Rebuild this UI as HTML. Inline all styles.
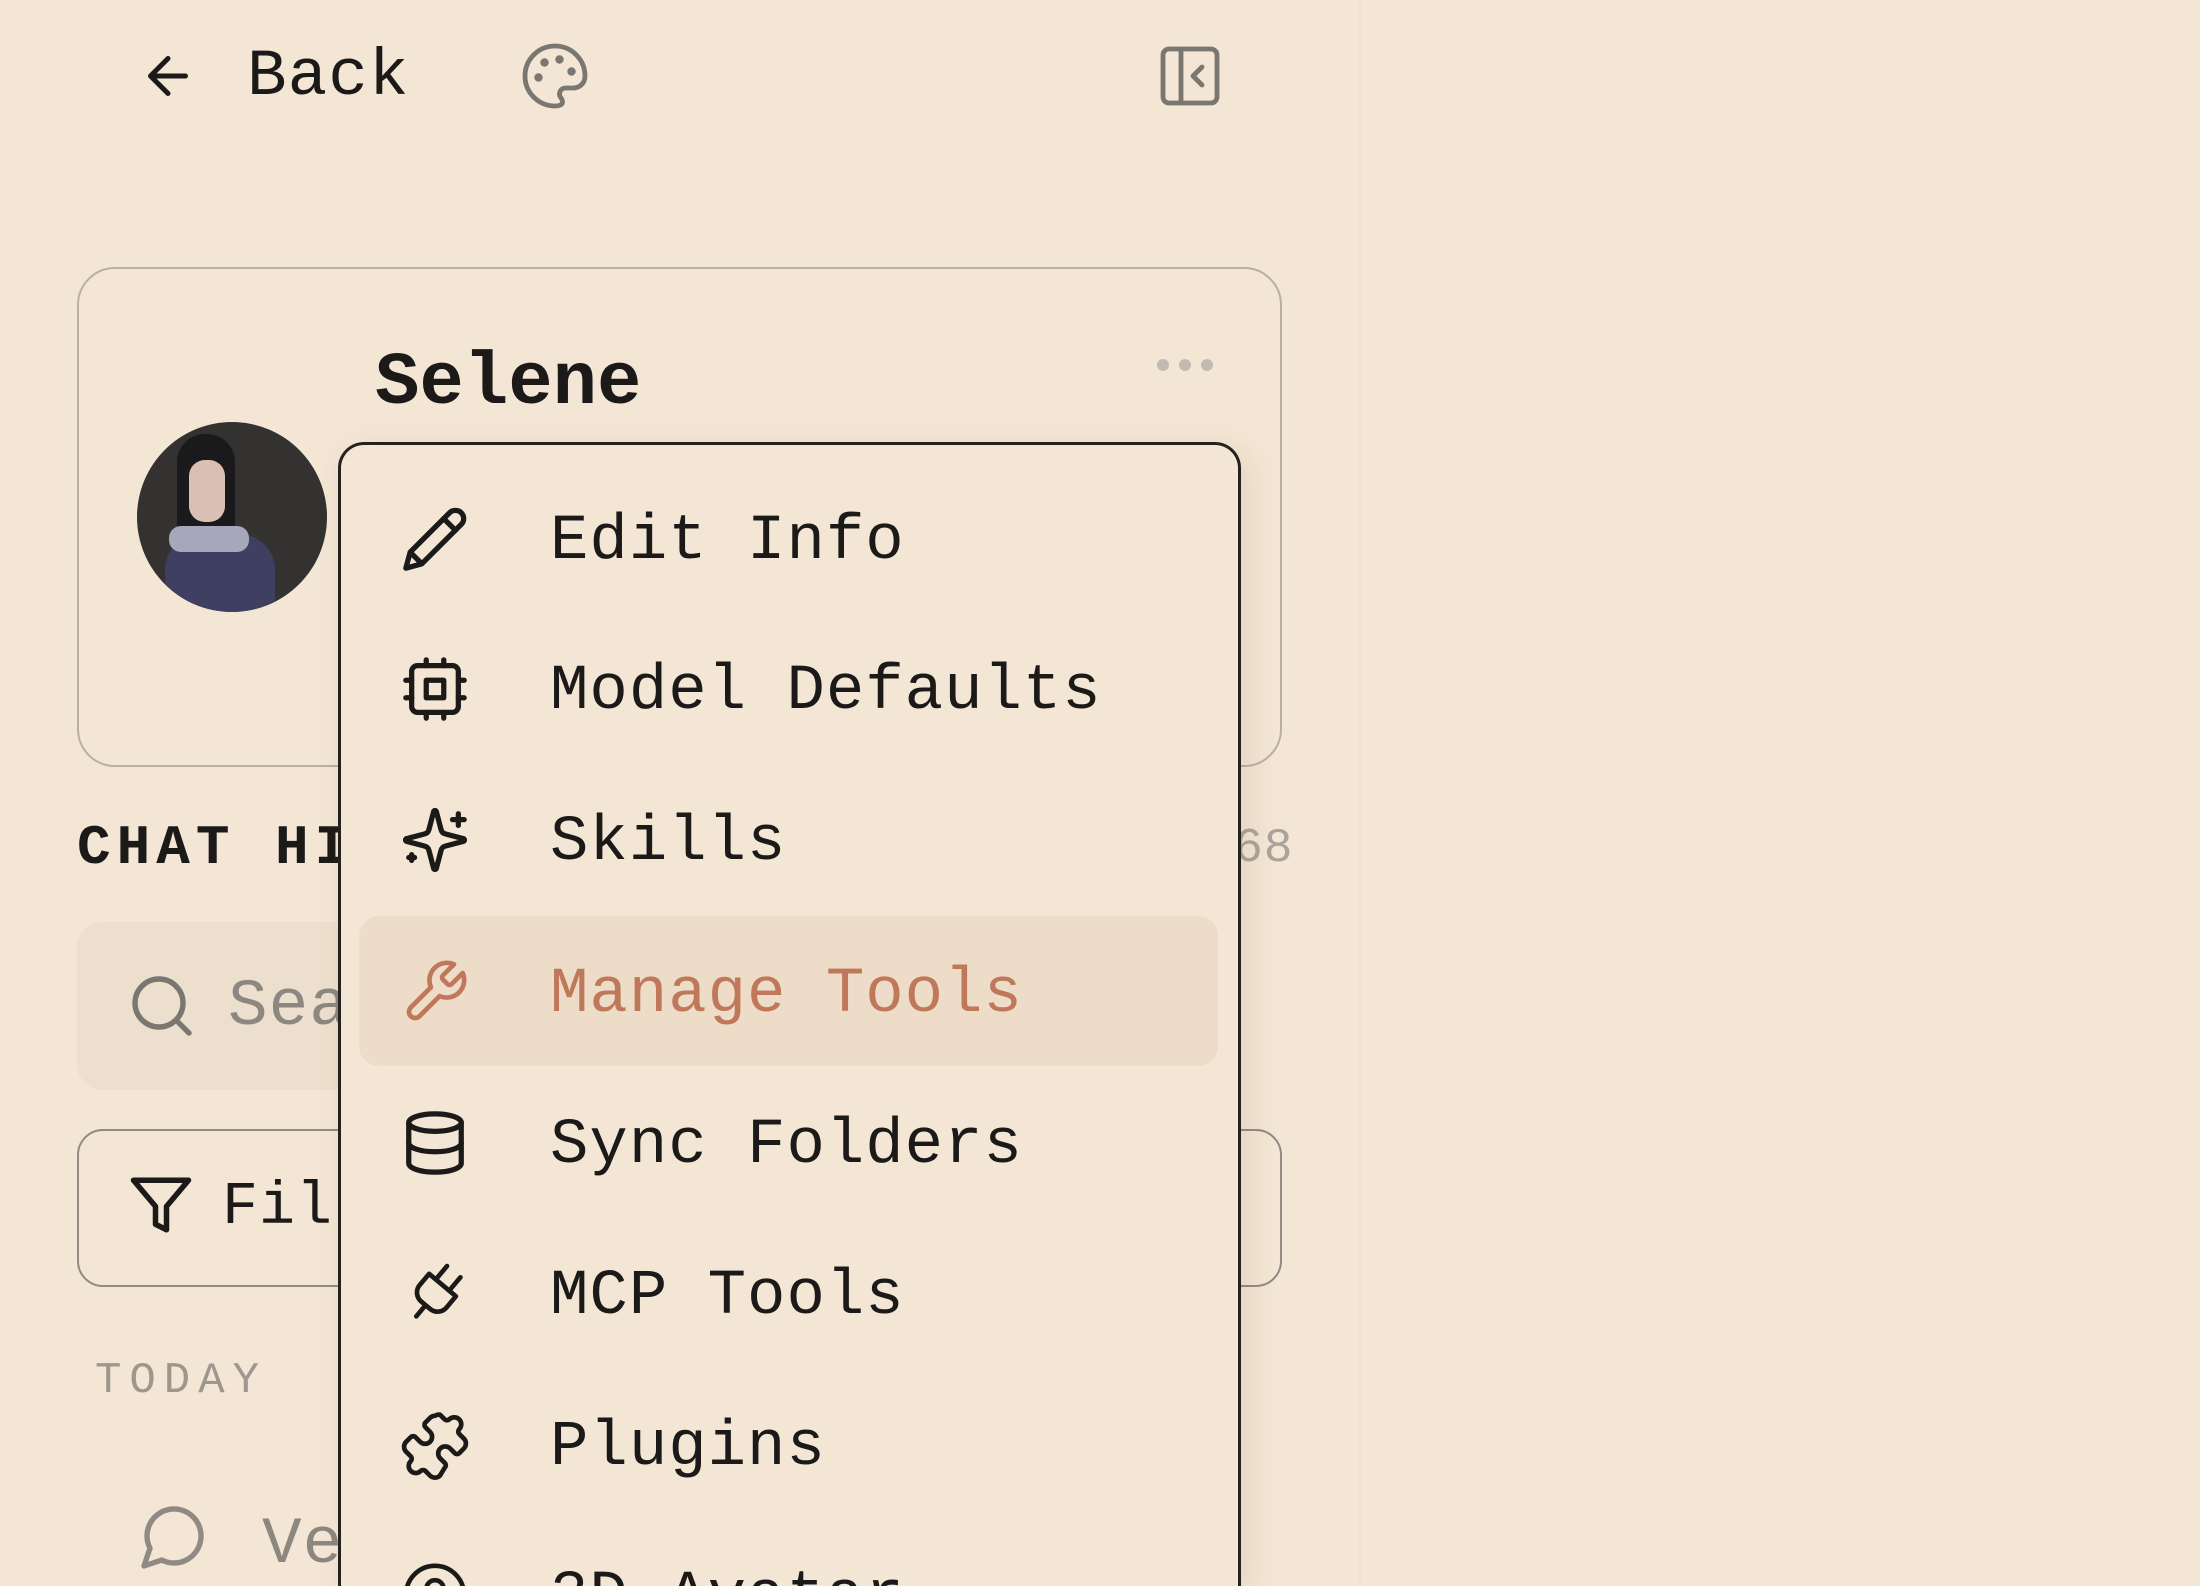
<!DOCTYPE html>
<html><head><meta charset="utf-8"><style>
*{margin:0;padding:0;box-sizing:border-box}
html,body{width:2200px;height:1586px;overflow:hidden}
body{background:#f3e6d4;font-family:"Liberation Mono","DejaVu Sans Mono",monospace;color:#1c1a18}
#w{position:relative;width:2200px;height:1586px;overflow:hidden}
.side{position:absolute;left:0;top:0;width:1361px;height:1586px;background:#f3e6d4;border-right:2px solid #efe1ce}
.abs{position:absolute}
svg{position:absolute;fill:none;stroke-linecap:round;stroke-linejoin:round}
.t{position:absolute;white-space:nowrap;font-size:64px;letter-spacing:1px;line-height:1}
.card{left:77px;top:267px;width:1205px;height:500px;border:2.5px solid #b9b0a3;border-radius:38px}
.menu{left:338px;top:442px;width:903px;height:1144px;border:3px solid #242220;border-bottom:none;border-radius:26px 26px 0 0;background:#f3e6d4;box-shadow:8px 8px 30px rgba(120,90,50,.12)}
.hl{left:359px;top:916px;width:859px;height:150px;background:#eddcc8;border-radius:20px}
</style></head><body><div id="w">
<div class="side"></div>

<svg style="left:136px;top:46px" width="64" height="60" viewBox="0 0 24 24" stroke="#1c1a18" stroke-width="2"><path d="M19 12H5M12 19l-7-7 7-7"/></svg>
<div class="t" style="left:247px;top:44px;font-size:66px">Back</div>
<svg style="left:519px;top:40px" width="72" height="72" viewBox="0 0 24 24" stroke="#7a7670" stroke-width="1.6"><path d="M12 22a10 10 0 1 1 10-10c0 2.8-2.2 4-4 4h-2.5a2 2 0 0 0-1.5 3.3c.3.4.5.8.5 1.3 0 1-.8 1.4-2.5 1.4z"/><circle cx="13.5" cy="6.5" r=".6" fill="#7a7670"/><circle cx="17.5" cy="10.5" r=".6" fill="#7a7670"/><circle cx="8.5" cy="7.5" r=".6" fill="#7a7670"/><circle cx="6.5" cy="12.5" r=".6" fill="#7a7670"/></svg>
<svg style="left:1154px;top:40px" width="72" height="72" viewBox="0 0 24 24" stroke="#7a7670" stroke-width="1.6"><rect x="3" y="3" width="18" height="18" rx="2"/><path d="M9 3v18M16 15l-3-3 3-3"/></svg>

<div class="abs card"></div>
<div class="t" style="left:375px;top:347px;font-size:74px;font-weight:bold;letter-spacing:0">Selene</div>
<div class="abs" style="left:1157px;top:359px;width:12px;height:12px;border-radius:6px;background:#c2bbb2;box-shadow:22px 0 0 #c2bbb2,44px 0 0 #c2bbb2"></div>
<div class="abs" style="left:137px;top:422px;width:190px;height:190px;border-radius:50%;background:#333230;overflow:hidden">
 <div class="abs" style="left:40px;top:12px;width:58px;height:115px;border-radius:28px 28px 8px 8px;background:#1a191c"></div>
 <div class="abs" style="left:52px;top:38px;width:36px;height:62px;border-radius:16px;background:#d9c0b2"></div>
 <div class="abs" style="left:28px;top:112px;width:110px;height:90px;border-radius:36px 36px 0 0;background:#3f3f62"></div>
 <div class="abs" style="left:32px;top:104px;width:80px;height:26px;border-radius:12px;background:#a7a7bb"></div>
</div>

<div class="t" style="left:77px;top:820px;font-size:56px;font-weight:bold;letter-spacing:6px">CHAT HI</div>
<div class="t" style="left:1234px;top:825px;font-size:48px;color:#aaa49b">68</div>
<div class="abs" style="left:77px;top:922px;width:400px;height:168px;border-radius:26px;background:#ecdfcd"></div>
<svg style="left:126px;top:970px" width="72" height="72" viewBox="0 0 24 24" stroke="#7a7670" stroke-width="1.8"><circle cx="11" cy="11" r="8"/><path d="M21 21l-4.3-4.3"/></svg>
<div class="t" style="left:228px;top:974px;font-size:66px;color:#8c877f">Sea</div>
<div class="abs" style="left:77px;top:1129px;width:1205px;height:158px;border:2.5px solid #8f8a83;border-radius:26px"></div>
<svg style="left:128px;top:1172px" width="66" height="66" viewBox="0 0 24 24" stroke="#1c1a18" stroke-width="2"><path d="M22 3H2l8 9.5V19l4 2v-8.5z"/></svg>
<div class="t" style="left:222px;top:1178px;font-size:60px">Fil</div>
<div class="t" style="left:95px;top:1359px;font-size:44px;color:#9d978e;letter-spacing:8px">TODAY</div>
<svg style="left:138px;top:1500px" width="72" height="72" viewBox="0 0 24 24" stroke="#8f8a83" stroke-width="1.8"><path d="M7.9 20A9 9 0 1 0 4 16.1L2 22z"/></svg>
<div class="t" style="left:262px;top:1512px;font-size:66px;color:#8c877f">Ve</div>

<div class="abs menu"></div>
<div class="abs hl"></div>
<svg style="left:400px;top:504px" width="70" height="70" viewBox="0 0 24 24" stroke="#1c1a18" stroke-width="1.8"><path d="M17 3a2.8 2.8 0 1 1 4 4L7.5 20.5 2 22l1.5-5.5z"/><path d="M15 5l4 4M4 17l3 3"/></svg>
<svg style="left:400px;top:654px" width="70" height="70" viewBox="0 0 24 24" stroke="#1c1a18" stroke-width="1.8"><rect x="4" y="4" width="16" height="16" rx="2"/><rect x="9" y="9" width="6" height="6"/><path d="M15 2v2M15 20v2M2 15h2M2 9h2M20 15h2M20 9h2M9 2v2M9 20v2"/></svg>
<svg style="left:400px;top:805px" width="70" height="70" viewBox="0 0 24 24" stroke="#1c1a18" stroke-width="1.8"><path d="M9.9 15.5a2 2 0 0 0-1.4-1.4l-6.1-1.6a.5.5 0 0 1 0-1l6.1-1.6a2 2 0 0 0 1.4-1.4l1.6-6.1a.5.5 0 0 1 1 0l1.6 6.1a2 2 0 0 0 1.4 1.4l6.1 1.6a.5.5 0 0 1 0 1l-6.1 1.6a2 2 0 0 0-1.4 1.4l-1.6 6.1a.5.5 0 0 1-1 0z"/><path d="M20 3v4M22 5h-4M4 17v2M5 18H3"/></svg>
<svg style="left:400px;top:957px" width="70" height="70" viewBox="0 0 24 24" stroke="#c0785a" stroke-width="1.6"><path d="M14.7 6.3a1 1 0 0 0 0 1.4l1.6 1.6a1 1 0 0 0 1.4 0l3.8-3.8a6 6 0 0 1-7.9 7.9l-6.9 6.9a2.1 2.1 0 0 1-3-3l6.9-6.9a6 6 0 0 1 7.9-7.9z"/></svg>
<svg style="left:400px;top:1108px" width="70" height="70" viewBox="0 0 24 24" stroke="#1c1a18" stroke-width="1.8"><ellipse cx="12" cy="5" rx="9" ry="3"/><path d="M3 5v14a9 3 0 0 0 18 0V5"/><path d="M3 12a9 3 0 0 0 18 0"/></svg>
<svg style="left:400px;top:1259px" width="70" height="70" viewBox="0 0 24 24" stroke="#1c1a18" stroke-width="1.6"><g transform="rotate(40 12 12)"><path d="M12 22v-5M9 8V2M15 8V2M18 8v5a4 4 0 0 1-4 4h-4a4 4 0 0 1-4-4V8Z"/></g></svg>
<svg style="left:400px;top:1410px" width="70" height="70" viewBox="0 0 24 24" stroke="#1c1a18" stroke-width="1.6"><path d="M15.4 19.7a.98.98 0 0 0 .3-.8c0-.3-.1-.5-.3-.7l-1.6-1.6a2.4 2.4 0 1 1 3.4-3.4l1.6 1.6c.2.2.5.3.7.3.3 0 .6-.1.8-.3l1.6-1.6c.5-.5.7-1.1.7-1.7 0-.7-.3-1.3-.7-1.7l-1.6-1.6a.98.98 0 0 1-.3-.8c0-.3.1-.6.3-.8a2.4 2.4 0 0 0-3.4-3.4c-.2.2-.5.3-.8.3-.3 0-.6-.1-.8-.3l-1.6-1.6A2.4 2.4 0 0 0 12 2c-.6 0-1.2.2-1.7.7L8.7 4.3c-.2.2-.3.5-.3.8s.1.6.3.8l1.6 1.6a2.4 2.4 0 1 1-3.4 3.4L5.3 9.3a1 1 0 0 0-.8-.3c-.3 0-.6.1-.8.3L2.1 10.9C1.7 11.3 1.4 11.9 1.4 12.6s.3 1.3.7 1.7l1.6 1.6c.2.2.3.5.3.8s-.1.6-.3.8a2.4 2.4 0 1 0 3.4 3.4c.2-.2.5-.3.8-.3.3 0 .6.1.8.3l1.6 1.6c.5.5 1.1.7 1.7.7s1.2-.2 1.7-.7z"/></svg>
<svg style="left:400px;top:1560px" width="70" height="26" viewBox="0 0 24 9" stroke="#1c1a18" stroke-width="1.6"><circle cx="12" cy="12" r="10"/><circle cx="12" cy="10" r="3"/></svg>
<div class="t" style="left:550px;top:510px">Edit Info</div>
<div class="t" style="left:550px;top:660px">Model Defaults</div>
<div class="t" style="left:550px;top:811px">Skills</div>
<div class="t" style="left:550px;top:963px;color:#c0785a">Manage Tools</div>
<div class="t" style="left:550px;top:1114px">Sync Folders</div>
<div class="t" style="left:550px;top:1265px">MCP Tools</div>
<div class="t" style="left:550px;top:1416px">Plugins</div>
<div class="t" style="left:550px;top:1566px;height:20px;overflow:hidden">3D Avatar</div>
</div></body></html>
